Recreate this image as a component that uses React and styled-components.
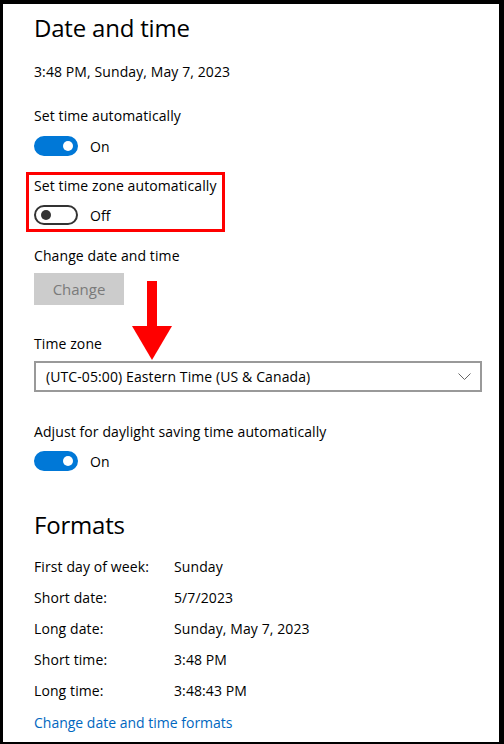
import React from "react";
import styled, { createGlobalStyle } from "styled-components";

const GlobalStyle = createGlobalStyle`
  html, body {
    margin: 0;
    padding: 0;
    background: #000;
  }
  body {
    font-family: "Open Sans", "Noto Sans", sans-serif;
    color: #000;
  }
`;

const Frame = styled.div`
  width: 504px;
  height: 744px;
  box-sizing: border-box;
  border-style: solid;
  border-color: #000;
  border-width: 4px 5px 2px 3px;
  background: #fff;
  overflow: hidden;
`;

const Page = styled.div`
  position: relative;
  padding: 8px 17px 0 31px;
`;

const Title = styled.h1`
  margin: ${(p) => p.$top || 0}px 0 0;
  font-size: 24px;
  font-weight: 400;
  line-height: 32px;
  letter-spacing: -0.2px;
`;

const Text = styled.div`
  font-size: 14px;
  line-height: 20px;
  letter-spacing: 0.1px;
  margin-top: ${(p) => p.$top || 0}px;
`;

const ToggleRow = styled.div`
  display: flex;
  align-items: center;
  gap: 12px;
  height: 20px;
  margin-top: ${(p) => p.$top || 0}px;
  font-size: 14px;
`;

const Track = styled.span`
  position: relative;
  box-sizing: border-box;
  width: 44px;
  height: 20px;
  border-radius: 10px;
  background: ${(p) => (p.$on ? "#0078d7" : "#fff")};
  border: 2px solid ${(p) => (p.$on ? "#0078d7" : "#333")};

  &::after {
    content: "";
    position: absolute;
    top: 3px;
    left: ${(p) => (p.$on ? "27px" : "5px")};
    width: 10px;
    height: 10px;
    border-radius: 50%;
    background: ${(p) => (p.$on ? "#fff" : "#333")};
  }
`;

const Highlight = styled.div`
  margin: 16px 0 0 -8px;
  width: 199px;
  box-sizing: border-box;
  border: 3px solid #f00;
  padding: 1px 0 4px 5px;
`;

const Button = styled.div`
  margin-top: 7px;
  width: 90px;
  height: 32px;
  background: #cccccc;
  color: #7a7a7a;
  font-size: 15px;
  display: flex;
  align-items: center;
  justify-content: center;
`;

const Select = styled.div`
  margin-top: 7px;
  height: 31px;
  box-sizing: border-box;
  border: 2px solid #999;
  display: flex;
  align-items: center;
  justify-content: space-between;
  padding: 0 9px 0 10px;
  font-size: 14px;
  letter-spacing: 0.1px;
`;

const Grid = styled.div`
  display: grid;
  grid-template-columns: 140px 1fr;
  grid-auto-rows: 31px;
  align-items: center;
  margin-top: 10px;
  font-size: 14px;
  letter-spacing: 0.1px;
`;

const Link = styled.a`
  display: block;
  margin-top: 7px;
  font-size: 14px;
  line-height: 20px;
  color: #0067c0;
  text-decoration: none;
`;

const Arrow = styled.svg`
  position: absolute;
  left: 129px;
  top: 277px;
`;

const Chevron = () => (
  <svg width="13" height="8" viewBox="0 0 13 8">
    <path d="M0.5 0.5 L6.5 6.5 L12.5 0.5" fill="none" stroke="#666" strokeWidth="1" />
  </svg>
);

const formats = [
  ["First day of week:", "Sunday"],
  ["Short date:", "5/7/2023"],
  ["Long date:", "Sunday, May 7, 2023"],
  ["Short time:", "3:48 PM"],
  ["Long time:", "3:48:43 PM"],
];

export default function App() {
  return (
    <>
      <GlobalStyle />
      <Frame>
        <Page>
          <Title>Date and time</Title>
          <Text $top={18}>3:48 PM, Sunday, May 7, 2023</Text>

          <Text $top={24}>Set time automatically</Text>
          <ToggleRow $top={10}>
            <Track $on />
            On
          </ToggleRow>

          <Highlight>
            <Text>Set time zone automatically</Text>
            <ToggleRow $top={9}>
              <Track />
              Off
            </ToggleRow>
          </Highlight>

          <Text $top={14}>Change date and time</Text>
          <Button>Change</Button>

          <Text $top={29}>Time zone</Text>
          <Select>
            <span>(UTC-05:00) Eastern Time (US &amp; Canada)</span>
            <Chevron />
          </Select>

          <Text $top={30}>Adjust for daylight saving time automatically</Text>
          <ToggleRow $top={9}>
            <Track $on />
            On
          </ToggleRow>

          <Title $top={38}>Formats</Title>
          <Grid>
            {formats.map(([k, v]) => (
              <React.Fragment key={k}>
                <span>{k}</span>
                <span>{v}</span>
              </React.Fragment>
            ))}
          </Grid>
          <Link href="#">Change date and time formats</Link>

          <Arrow width="40" height="80" viewBox="0 0 40 80">
            <rect x="15" y="0" width="10" height="46" fill="#f00" />
            <polygon points="0,45 40,45 20,79" fill="#f00" />
          </Arrow>
        </Page>
      </Frame>
    </>
  );
}
